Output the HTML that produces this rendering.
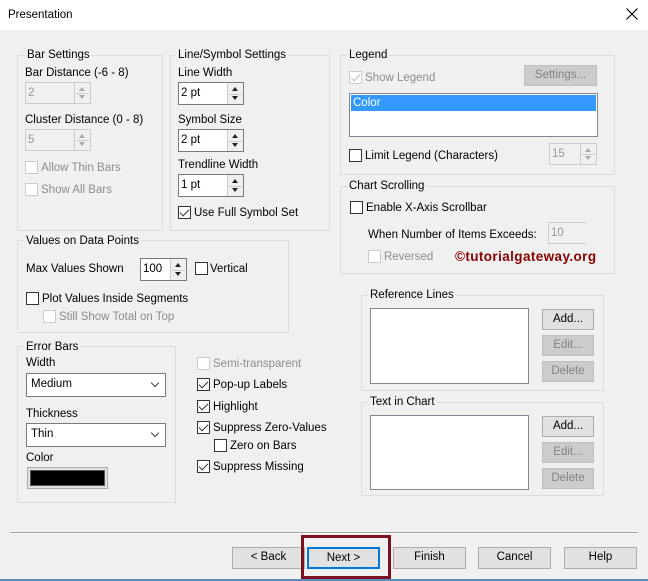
<!DOCTYPE html>
<html><head><style>
*{box-sizing:border-box;margin:0;padding:0}
body{width:648px;height:581px;background:#f0f0f0;font-family:"Liberation Sans",sans-serif;font-size:11.5px;color:#000;position:relative;overflow:hidden}
.a{position:absolute;white-space:nowrap}
.t{position:absolute;white-space:nowrap;line-height:14px}
.g{position:absolute;border:1px solid #dcdcdc}
.gl{position:absolute;background:#f0f0f0;padding:0 2px;line-height:14px;white-space:nowrap}
.cb{position:absolute;width:13px;height:13px;border:1px solid #333;background:#fff}
.cb.d{border-color:#ccc}
.cb.c::after{content:"";position:absolute;left:3px;top:0px;width:4px;height:8px;border:solid #333;border-width:0 1.5px 1.5px 0;transform:rotate(45deg)}
.cb.d.c::after{border-color:#bbb}
.sp{position:absolute;background:#fff;border:1px solid #7a7a7a;line-height:20px;padding-left:2px}
.sp.d{background:#f0f0f0;border-color:#ccc;color:#999}
.sp .ar{position:absolute;right:0;top:0;width:16px;height:100%;border-left:1px solid #ccc;background:#f0f0f0}
.sp .ar::before{content:"";position:absolute;left:4px;top:4px;border:3px solid transparent;border-bottom:4px solid #222;border-top:0}
.sp .ar::after{content:"";position:absolute;left:4px;bottom:4px;border:3px solid transparent;border-top:4px solid #222;border-bottom:0}
.sp.d .ar::before{border-bottom-color:#aaa}.sp.d .ar::after{border-top-color:#aaa}
.sp .ar i{position:absolute;left:1px;right:1px;top:50%;border-top:1px solid #ccc}
.btn{position:absolute;background:#e1e1e1;border:1px solid #adadad;text-align:center;line-height:19px}
.btn.d{background:#ccc;border-color:#bfbfbf;color:#838383}
.lb{position:absolute;background:#fff;border:1px solid #828790}
.dd{position:absolute;background:#fff;border:1px solid #7a7a7a;line-height:21px;padding-left:4px}
.dd::after{content:"";position:absolute;right:7px;top:6px;width:5px;height:5px;border:solid #444;border-width:0 1px 1px 0;transform:rotate(45deg)}
.gr{color:#8d8d8d}
</style></head><body>
<div class="a" style="left:0;top:0;width:648px;height:30px;background:#fff"></div>
<div class="t" style="left:8px;top:8px">Presentation</div>
<svg class="a" style="left:626px;top:8px" width="12" height="12" viewBox="0 0 12 12"><path d="M0.5 0.5L11.5 11.5M11.5 0.5L0.5 11.5" stroke="#000" stroke-width="1.1"/></svg>

<!-- Bar settings -->
<div class="g" style="left:17px;top:55px;width:146px;height:176px"></div>
<div class="gl" style="left:25px;top:48px">Bar Settings</div>
<div class="t" style="left:25px;top:66px">Bar Distance (-6 - 8)</div>
<div class="sp d" style="left:25px;top:82px;width:66px;height:22px">2<div class="ar"><i></i></div></div>
<div class="t" style="left:25px;top:113px">Cluster Distance (0 - 8)</div>
<div class="sp d" style="left:25px;top:129px;width:66px;height:22px">5<div class="ar"><i></i></div></div>
<div class="cb d" style="left:25px;top:161px"></div><div class="t gr" style="left:41px;top:161px">Allow Thin Bars</div>
<div class="cb d" style="left:25px;top:183px"></div><div class="t gr" style="left:41px;top:183px">Show All Bars</div>

<!-- Line/Symbol -->
<div class="g" style="left:170px;top:55px;width:160px;height:176px"></div>
<div class="gl" style="left:176px;top:48px">Line/Symbol Settings</div>
<div class="t" style="left:178px;top:66px">Line Width</div>
<div class="sp" style="left:178px;top:82px;width:66px;height:23px">2 pt<div class="ar"><i></i></div></div>
<div class="t" style="left:178px;top:113px">Symbol Size</div>
<div class="sp" style="left:178px;top:129px;width:66px;height:23px">2 pt<div class="ar"><i></i></div></div>
<div class="t" style="left:178px;top:158px">Trendline Width</div>
<div class="sp" style="left:178px;top:174px;width:66px;height:23px">1 pt<div class="ar"><i></i></div></div>
<div class="cb c" style="left:178px;top:206px"></div><div class="t" style="left:194px;top:206px">Use Full Symbol Set</div>

<!-- Legend -->
<div class="g" style="left:340px;top:55px;width:275px;height:120px"></div>
<div class="gl" style="left:347px;top:48px">Legend</div>
<div class="cb d c" style="left:349px;top:71px"></div><div class="t gr" style="left:365px;top:71px">Show Legend</div>
<div class="btn d" style="left:524px;top:65px;width:73px;height:21px">Settings...</div>
<div class="lb" style="left:349px;top:93px;width:249px;height:44px"><div style="margin:1px;background:#3399ff;color:#fff;line-height:16px;padding-left:2px">Color</div></div>
<div class="cb" style="left:349px;top:149px"></div><div class="t" style="left:365px;top:149px">Limit Legend (Characters)</div>
<div class="sp d" style="left:549px;top:143px;width:48px;height:22px">15<div class="ar"><i></i></div></div>

<!-- Chart scrolling -->
<div class="g" style="left:340px;top:186px;width:275px;height:88px"></div>
<div class="gl" style="left:347px;top:179px">Chart Scrolling</div>
<div class="cb" style="left:350px;top:201px"></div><div class="t" style="left:366px;top:201px">Enable X-Axis Scrollbar</div>
<div class="t" style="left:368px;top:228px">When Number of Items Exceeds:</div>
<div class="sp d" style="left:548px;top:222px;width:38px;height:22px;border-right:none">10</div>
<div class="cb d" style="left:368px;top:250px"></div><div class="t gr" style="left:384px;top:250px">Reversed</div>
<div class="t" style="left:455px;top:250px;color:#8b0000;font-weight:bold;font-size:13.5px;letter-spacing:0.4px">&copy;tutorialgateway.org</div>

<!-- Values on data points -->
<div class="g" style="left:17px;top:240px;width:272px;height:93px"></div>
<div class="gl" style="left:24px;top:234px">Values on Data Points</div>
<div class="t" style="left:26px;top:262px">Max Values Shown</div>
<div class="sp" style="left:140px;top:258px;width:47px;height:23px">100<div class="ar"><i></i></div></div>
<div class="cb" style="left:195px;top:262px"></div><div class="t" style="left:210px;top:262px">Vertical</div>
<div class="cb" style="left:26px;top:292px"></div><div class="t" style="left:42px;top:292px">Plot Values Inside Segments</div>
<div class="cb d" style="left:43px;top:310px"></div><div class="t gr" style="left:59px;top:310px">Still Show Total on Top</div>

<!-- Error bars -->
<div class="g" style="left:17px;top:346px;width:159px;height:157px"></div>
<div class="gl" style="left:24px;top:340px">Error Bars</div>
<div class="t" style="left:26px;top:356px">Width</div>
<div class="dd" style="left:26px;top:373px;width:140px;height:24px">Medium</div>
<div class="t" style="left:26px;top:407px">Thickness</div>
<div class="dd" style="left:26px;top:423px;width:140px;height:24px">Thin</div>
<div class="t" style="left:26px;top:451px">Color</div>
<div class="a" style="left:27px;top:467px;width:81px;height:22px;border:1px solid #adadad;background:#e1e1e1;padding:2px"><div style="background:#000;width:100%;height:100%;border:1px solid #555"></div></div>

<!-- checkboxes middle -->
<div class="cb d" style="left:197px;top:357px"></div><div class="t gr" style="left:213px;top:357px">Semi-transparent</div>
<div class="cb c" style="left:197px;top:378px"></div><div class="t" style="left:213px;top:378px">Pop-up Labels</div>
<div class="cb c" style="left:197px;top:400px"></div><div class="t" style="left:213px;top:400px">Highlight</div>
<div class="cb c" style="left:197px;top:421px"></div><div class="t" style="left:213px;top:421px">Suppress Zero-Values</div>
<div class="cb" style="left:214px;top:439px"></div><div class="t" style="left:230px;top:439px">Zero on Bars</div>
<div class="cb c" style="left:197px;top:460px"></div><div class="t" style="left:213px;top:460px">Suppress Missing</div>

<!-- Reference lines -->
<div class="g" style="left:361px;top:295px;width:243px;height:96px"></div>
<div class="gl" style="left:368px;top:288px">Reference Lines</div>
<div class="lb" style="left:370px;top:308px;width:159px;height:76px"></div>
<div class="btn" style="left:542px;top:309px;width:52px;height:21px">Add...</div>
<div class="btn d" style="left:542px;top:335px;width:52px;height:21px">Edit...</div>
<div class="btn d" style="left:542px;top:361px;width:52px;height:21px">Delete</div>

<!-- Text in chart -->
<div class="g" style="left:361px;top:402px;width:243px;height:94px"></div>
<div class="gl" style="left:368px;top:395px">Text in Chart</div>
<div class="lb" style="left:370px;top:415px;width:159px;height:75px"></div>
<div class="btn" style="left:542px;top:416px;width:52px;height:21px">Add...</div>
<div class="btn d" style="left:542px;top:442px;width:52px;height:21px">Edit...</div>
<div class="btn d" style="left:542px;top:468px;width:52px;height:21px">Delete</div>

<!-- bottom -->
<div class="a" style="left:10px;top:532px;width:628px;height:1px;background:#a0a0a0"></div>
<div class="a" style="left:10px;top:533px;width:628px;height:1px;background:#fff"></div>
<div class="btn" style="left:232px;top:547px;width:73px;height:22px">&lt; Back</div>
<div class="a" style="left:301px;top:535px;width:90px;height:44px;border:3px solid #7b1020"></div>
<div class="btn" style="left:307px;top:547px;width:73px;height:22px;border:2px solid #0078d7;line-height:18px">Next &gt;</div>
<div class="btn" style="left:393px;top:547px;width:73px;height:22px">Finish</div>
<div class="btn" style="left:478px;top:547px;width:73px;height:22px">Cancel</div>
<div class="btn" style="left:564px;top:547px;width:73px;height:22px">Help</div>
<div class="a" style="left:0;top:579px;width:648px;height:2px;background:#5a8cc0"></div>
</body></html>
